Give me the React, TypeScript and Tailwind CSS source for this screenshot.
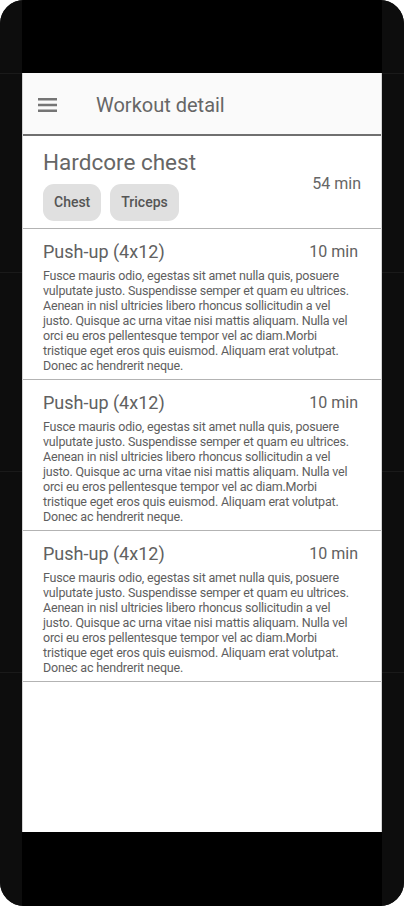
const body =
  "Fusce mauris odio, egestas sit amet nulla quis, posuere vulputate justo. Suspendisse semper et quam eu ultrices. Aenean in nisl ultricies libero rhoncus sollicitudin a vel justo. Quisque ac urna vitae nisi mattis aliquam. Nulla vel orci eu eros pellentesque tempor vel ac diam.Morbi tristique eget eros quis euismod. Aliquam erat volutpat. Donec ac hendrerit neque.";

function Bezel() {
  return (
    <div className="w-[22px] flex flex-col bg-[#0d0d0d]">
      <div className="h-[73px]" />
      <div className="h-[199px] border-t border-[#1a1a1a]" />
      <div className="h-[199px] border-t border-[#1a1a1a]" />
      <div className="h-[201px] border-t border-[#1a1a1a]" />
      <div className="flex-1 border-t border-[#1a1a1a]" />
    </div>
  );
}

function Exercise() {
  return (
    <div className="h-[151px] px-5 pt-[9px] border-b border-[#b3b3b3]">
      <div className="flex items-center justify-between text-[#616161]">
        <span className="text-[18px]">Push-up (4x12)</span>
        <span className="text-[16px] mr-[3px]">10 min</span>
      </div>
      <p className="mt-[3px] text-[12.5px] leading-[15px] text-[#5e5e5e] tracking-[-0.2px]">{body}</p>
    </div>
  );
}

export default function App() {
  return (
    <div className="w-[404px] h-[906px] bg-white" style={{ fontFamily: "Roboto, 'Noto Sans', sans-serif" }}>
      <div className="flex h-full w-full rounded-[24px] overflow-hidden bg-[#0d0d0d]">
        <Bezel />
        <div className="w-[360px] flex flex-col bg-black">
          <div className="h-[73px]" />
          <div className="flex-1 flex flex-col bg-white border-x border-[#d4d4d4]">
            {/* Header */}
            <div className="h-[63px] flex items-center pt-[3px] bg-[#fafafa] border-b-2 border-[#707070]">
              <svg className="ml-[15px] h-[16px] w-[20px]" viewBox="0 0 20 16" fill="none" stroke="#757575" strokeWidth="2.4">
                <path d="M0 2.2h19M0 8h19M0 13.8h19" />
              </svg>
              <span className="ml-[38px] text-[20px] text-[#666]">Workout detail</span>
            </div>

            {/* Workout summary */}
            <div className="h-[93px] px-5 pt-3 flex items-center justify-between border-b border-[#b3b3b3]">
              <div className="flex flex-col self-start">
                <h1 className="text-[22.5px] leading-7 text-[#666]">Hardcore chest</h1>
                <div className="mt-[8px] flex gap-[9px]">
                  <span className="h-[37px] px-[11px] flex items-center rounded-[11px] bg-[#e0e0e0] text-[14px] font-medium text-[#555]">Chest</span>
                  <span className="h-[37px] px-[11px] flex items-center rounded-[11px] bg-[#e0e0e0] text-[14px] font-medium text-[#555]">Triceps</span>
                </div>
              </div>
              <span className="mb-[9px] text-[16px] text-[#666]">54 min</span>
            </div>

            <Exercise />
            <Exercise />
            <Exercise />
          </div>
          <div className="h-[74px]" />
        </div>
        <Bezel />
      </div>
    </div>
  );
}
